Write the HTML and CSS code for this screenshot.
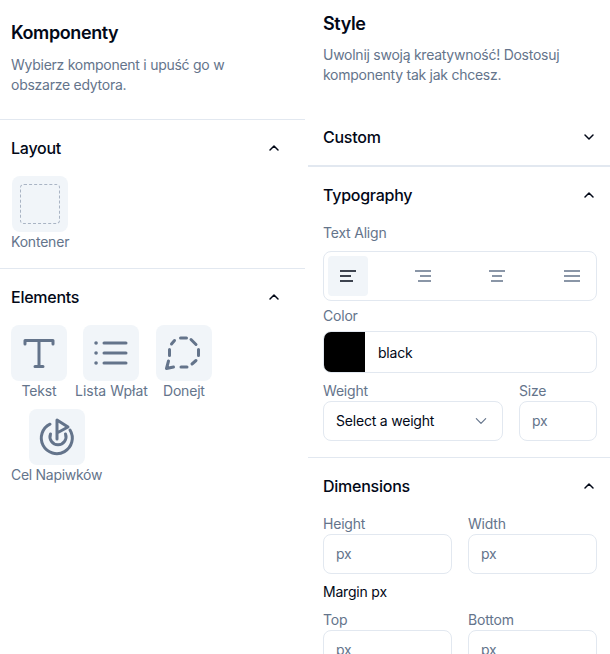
FILE: index.html
```html
<!DOCTYPE html>
<html lang="pl">
<head>
  <meta charset="utf8"/>
  <meta name="viewport" content="width=device-width"/>
  <title>Komponenty</title>
  <link rel="stylesheet" href="styles.css">
</head>
<body>
  <div class="page">
    <aside class="left">
      <div class="intro">
        <h1>Komponenty</h1>
        <p>Wybierz komponent i upuść go w obszarze edytora.</p>
      </div>
      <section class="group">
        <div class="group-head">
          <h2>Layout</h2>
          <svg class="chev" viewBox="0 0 12 12"><path d="M2 8l4-4 4 4"/></svg>
        </div>
        <div class="tiles">
          <div class="item">
            <div class="tile"><div class="dashed"></div></div>
            <span>Kontener</span>
          </div>
        </div>
      </section>
      <section class="group elements">
        <div class="group-head">
          <h2>Elements</h2>
          <svg class="chev" viewBox="0 0 12 12"><path d="M2 8l4-4 4 4"/></svg>
        </div>
        <div class="tiles">
          <div class="item">
            <div class="tile">
              <svg class="ico" viewBox="0 0 56 56"><path d="M14 19v-3.500h28v3.500M28 15.500v26M24 41.500h8"/></svg>
            </div>
            <span>Tekst</span>
          </div>
          <div class="item item-list">
            <div class="tile">
              <svg class="ico" viewBox="0 0 56 56"><path d="M21 18h22M21 28h22M21 38h22"/><path class="dot" d="M13 18h.1M13 28h.1M13 38h.1"/></svg>
            </div>
            <span>Lista Wpłat</span>
          </div>
          <div class="item">
            <div class="tile">
              <svg class="ico" viewBox="0 0 56 56"><path d="M15.500 19l3-3.500M24.500 13h6M35 14.500l5 5M42.500 24.500v6M40 35.500l-4 3.500M31 42h-6M17.500 42l-7 1.500 2-7.500M13.500 24.500v6"/></svg>
            </div>
            <span>Donejt</span>
          </div>
          <div class="item item-goal">
            <div class="tile">
              <svg class="ico" viewBox="0 0 56 56"><path d="M28 30V11l11 7-11 6"/><path d="M21 15.200A15.500 15.500 0 1 0 41 21"/><path d="M21.500 25a8 8 0 1 0 15 0"/></svg>
            </div>
            <span>Cel Napiwków</span>
          </div>
        </div>
      </section>
    </aside>
    <main class="right">
      <div class="style-intro">
        <h1>Style</h1>
        <p>Uwolnij swoją kreatywność! Dostosuj komponenty tak jak chcesz.</p>
      </div>
      <section class="panel custom">
        <div class="panel-head">
          <h2>Custom</h2>
          <svg class="chev small" viewBox="0 0 12 12"><path d="M2 4l4 4 4-4"/></svg>
        </div>
      </section>
      <section class="panel typography">
        <div class="panel-head">
          <h2>Typography</h2>
          <svg class="chev small" viewBox="0 0 12 12"><path d="M2 8l4-4 4 4"/></svg>
        </div>
        <label class="lbl">Text Align</label>
        <div class="align">
          <button class="align-btn active"><svg viewBox="0 0 16 12"><path d="M0 1h16M0 6h11M0 11h13"/></svg></button>
          <button class="align-btn"><svg viewBox="0 0 16 12"><path d="M0 1h16M5 6h11M3 11h13"/></svg></button>
          <button class="align-btn"><svg viewBox="0 0 16 12"><path d="M0 1h16M3 6h10M2 11h12"/></svg></button>
          <button class="align-btn"><svg viewBox="0 0 16 12"><path d="M0 1h16M0 6h16M0 11h16"/></svg></button>
        </div>
        <label class="lbl">Color</label>
        <div class="color">
          <div class="swatch"></div>
          <span>black</span>
        </div>
        <div class="row weight-row">
          <div class="col grow">
            <label class="lbl">Weight</label>
            <div class="input select">
              <span>Select a weight</span>
              <svg class="chev sel" viewBox="0 0 12 12"><path d="M2 4l4 4 4-4"/></svg>
            </div>
          </div>
          <div class="col size">
            <label class="lbl">Size</label>
            <div class="input ph">px</div>
          </div>
        </div>
      </section>
      <section class="panel dimensions">
        <div class="panel-head">
          <h2>Dimensions</h2>
          <svg class="chev small" viewBox="0 0 12 12"><path d="M2 8l4-4 4 4"/></svg>
        </div>
        <div class="row">
          <div class="col half">
            <label class="lbl">Height</label>
            <div class="input ph">px</div>
          </div>
          <div class="col half">
            <label class="lbl">Width</label>
            <div class="input ph">px</div>
          </div>
        </div>
        <div class="margin-title">Margin px</div>
        <div class="row">
          <div class="col half">
            <label class="lbl">Top</label>
            <div class="input ph">px</div>
          </div>
          <div class="col half">
            <label class="lbl">Bottom</label>
            <div class="input ph">px</div>
          </div>
        </div>
      </section>
    </main>
  </div>
</body>
</html>
```

FILE: styles.css
```css
* { box-sizing: border-box; }
html, body { margin: 0; padding: 0; height: 100%; overflow: hidden; background: #fff; }
body { color: #020817; font-family: Inter, "Noto Sans", sans-serif; font-size: 14px; line-height: 20px; letter-spacing: -0.2px; }
h1, h2, p { margin: 0; }
h1 { font-size: 18px; line-height: 28px; font-weight: 600; letter-spacing: -0.4px; }
h2 { font-size: 16px; line-height: 24px; font-weight: 500; letter-spacing: -0.25px; }
p { color: #64748B; margin-top: 8px; letter-spacing: -0.26px; }

.page { display: flex; height: 654px; overflow: hidden; }
.left { width: 305px; flex: none; }
.right { width: 302px; margin-left: 3px; flex: none; }

/* left column */
.intro { padding: 19px 60px 24px 11px; border-bottom: 1px solid #E2E8F0; height: 120px; }
.group { padding: 0 11px; height: 149px; border-bottom: 1px solid #E2E8F0; }
.group.elements { border-bottom: 0; }
.group-head { display: flex; justify-content: space-between; align-items: center; height: 56px; padding-right: 14px; }
.tiles { display: flex; flex-wrap: wrap; gap: 8px; }
.item { display: flex; flex-direction: column; align-items: center; color: #64748B; }
.item-list span { letter-spacing: 0; }
.item-goal span { letter-spacing: -0.28px; }
.tile { width: 56px; height: 56px; border-radius: 8px; background: #F1F5F9; display: flex; align-items: center; justify-content: center; }
.dashed { width: 40px; height: 40px; border: 1px dashed #A9B4C4; border-radius: 4px; }
.ico { width: 56px; height: 56px; fill: none; stroke: #64748B; stroke-width: 3; stroke-linecap: round; stroke-linejoin: round; }
.ico .dot { stroke-width: 3.500; }

.chev { width: 12px; height: 12px; fill: none; stroke: #020817; stroke-width: 1.500; stroke-linecap: round; stroke-linejoin: round; flex: none; }
.chev.sel { width: 14px; height: 14px; margin-right: 2px; stroke: #64748B; stroke-width: 1; }

/* right column */
.style-intro { padding: 10px 13px 0 15px; height: 109px; }
.style-intro p { margin-top: 7px; }
.panel { padding: 0 13px 0 15px; }
.panel-head { display: flex; justify-content: space-between; align-items: center; height: 56px; padding-right: 2px; }
.custom { height: 58px; border-bottom: 2px solid #E2E8F0; }
.typography { height: 291px; border-bottom: 1px solid #E2E8F0; }
.lbl { display: block; color: #64748B; height: 20px; }
.align { display: flex; justify-content: space-between; height: 50px; margin: 8px 0 5px; padding: 4px; border: 1px solid #E2E8F0; border-radius: 8px; }
.align-btn { width: 40px; height: 40px; padding: 0; border: 0; border-radius: 4px; background: none; display: flex; align-items: center; justify-content: center; }
.align-btn svg { width: 16px; height: 12px; fill: none; stroke: #64748B; stroke-width: 1.500; }
.align-btn.active { background: #F1F5F9; }
.align-btn.active svg { stroke: #020817; }
.color { display: flex; align-items: center; height: 42px; margin-top: 5px; border: 1px solid #E2E8F0; border-radius: 8px; overflow: hidden; }
.swatch { width: 41px; height: 100%; background: #000; }
.color span { margin-left: 13px; padding-top: 1px; }
.row { display: flex; gap: 16px; }
.weight-row { margin-top: 8px; }
.col { display: flex; flex-direction: column; }
.grow { flex: 1; }
.size { width: 78px; }
.half { flex: 1; min-width: 0; }
.input { height: 40px; border: 1px solid #E2E8F0; border-radius: 8px; display: flex; align-items: center; padding: 0 12px; }
.ph { color: #64748B; }
.select { justify-content: space-between; }
.margin-title { margin: 8px 0 8px; }
```
